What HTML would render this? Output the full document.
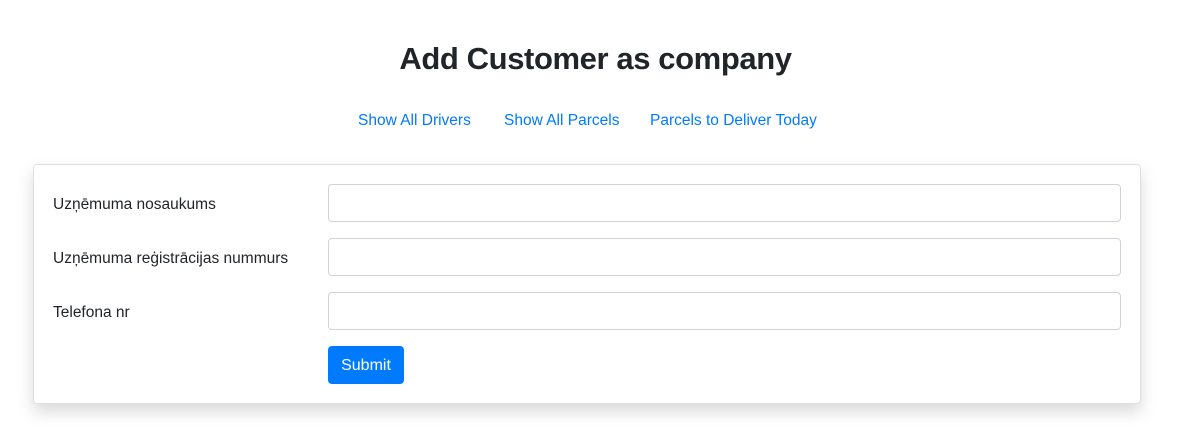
<!DOCTYPE html>
<html><head><meta charset="utf-8"><style>
body{margin:0;background:#fff;font-family:"Liberation Sans",sans-serif;color:#212529;width:1191px;height:433px;overflow:hidden;position:relative}
h1{position:absolute;top:37px;left:0;width:1191px;text-align:center;margin:0;font-size:31px;font-weight:bold;line-height:44px;letter-spacing:-0.4px}
.nav a{position:absolute;top:111px;color:#007bff;text-decoration:none;font-size:15.5px;line-height:20px;white-space:nowrap}
.card{position:absolute;left:33px;top:164px;width:1106px;height:238px;border:1px solid rgba(0,0,0,.125);border-radius:4px;box-shadow:0 .5rem 1rem rgba(0,0,0,.15)}
.lbl{position:absolute;left:53px;font-size:15.5px;line-height:20px}
.inp{position:absolute;left:328px;width:791px;height:36px;border:1px solid #ced4da;border-radius:4px;background:#fff}
.btn{position:absolute;left:328px;top:346px;width:76px;height:38px;background:#007bff;color:#fff;border-radius:4px;font-size:16px;line-height:39px;text-align:center}
</style></head><body>
<h1>Add Customer as company</h1>
<div class="nav"><a style="left:358px">Show All Drivers</a><a style="left:504px">Show All Parcels</a><a style="left:650px">Parcels to Deliver Today</a></div>
<div class="card"></div>
<div class="lbl" style="top:195px">Uzņēmuma nosaukums</div>
<div class="inp" style="top:184px"></div>
<div class="lbl" style="top:249px">Uzņēmuma reģistrācijas nummurs</div>
<div class="inp" style="top:238px"></div>
<div class="lbl" style="top:303px">Telefona nr</div>
<div class="inp" style="top:292px"></div>
<div class="btn">Submit</div>
</body></html>
